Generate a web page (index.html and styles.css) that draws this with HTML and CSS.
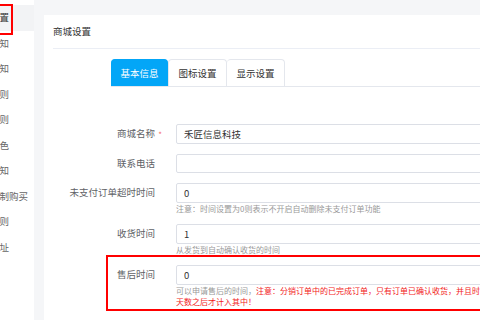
FILE: index.html
```html
<!DOCTYPE html>
<html lang="zh-CN">
<head>
<meta charset="utf-8">
<title>商城设置</title>
<link rel="stylesheet" href="styles.css">
</head>
<body>
<div class="app">
  <aside class="sidebar">
    <div class="nav-item active">商城设置</div>
    <div class="nav-item">短信通知</div>
    <div class="nav-item">邮件通知</div>
    <div class="nav-item">运费规则</div>
    <div class="nav-item">包邮规则</div>
    <div class="nav-item">主题配色</div>
    <div class="nav-item">打印通知</div>
    <div class="nav-item">商品限制购买</div>
    <div class="nav-item">起送规则</div>
    <div class="nav-item">退货地址</div>
    <div class="mark mark-nav"></div>
  </aside>
  <main class="main">
    <section class="card">
      <header class="card-head">商城设置</header>
      <div class="card-body">
        <div class="tabs">
          <div class="tab tab-1 active">基本信息</div>
          <div class="tab tab-2">图标设置</div>
          <div class="tab tab-3">显示设置</div>
        </div>
        <form class="form">
          <div class="row">
            <label class="label req">商城名称</label>
            <div class="field"><input class="input" type="text" value="禾匠信息科技" readonly></div>
          </div>
          <div class="row">
            <label class="label">联系电话</label>
            <div class="field"><input class="input" type="text" value="" readonly></div>
          </div>
          <div class="row">
            <label class="label">未支付订单超时时间</label>
            <div class="field">
              <input class="input" type="text" value="0" readonly>
              <div class="help">注意：时间设置为0则表示不开启自动删除未支付订单功能</div>
            </div>
          </div>
          <div class="row">
            <label class="label">收货时间</label>
            <div class="field">
              <input class="input" type="text" value="1" readonly>
              <div class="help">从发货到自动确认收货的时间</div>
            </div>
          </div>
          <div class="row row-marked">
            <label class="label">售后时间</label>
            <div class="field">
              <input class="input" type="text" value="0" readonly>
              <div class="help">可以申请售后的时间，<span class="warn">注意：分销订单中的已完成订单，只有订单已确认收货，并且时间超过设置的售后</span><br><span class="warn">天数之后才计入其中！</span></div>
            </div>
          </div>
        </form>
      </div>
    </section>
  </main>
</div>
</body>
</html>
```

FILE: styles.css
```css
html, body {
  margin: 0;
  padding: 0;
  width: 480px;
  height: 320px;
  overflow: hidden;
}
body {
  font-family: "Noto Sans CJK SC", "Noto Sans", sans-serif;
  font-size: 9.5px;
  color: #333;
  background: #f5f6f8;
}
.app {
  display: flex;
  height: 320px;
}
.sidebar {
  position: relative;
  flex: none;
  width: 34px;
  padding-top: 5px;
  background: #fff;
  overflow: hidden;
}
.nav-item {
  height: 25.5px;
  line-height: 25.5px;
  white-space: nowrap;
  text-indent: -29px;
  color: #666;
}
.nav-item.active {
  background: #f2f3f5;
  color: #333;
}
.mark {
  position: absolute;
  border: 2px solid #f00;
  box-sizing: border-box;
  pointer-events: none;
}
.mark-nav {
  left: -10px;
  top: 4px;
  width: 23px;
  height: 31px;
}
.main {
  flex: 1;
  min-width: 0;
  padding: 15px 0 0 10px;
}
.card {
  width: 620px;
  height: 305px;
  background: #fff;
}
.card-head {
  margin: 0 9px;
  height: 33px;
  line-height: 33px;
  border-bottom: 1px solid #ebeef5;
  color: #333;
}
.card-body {
  padding: 10px 0 0 9px;
}
.tabs {
  display: flex;
  margin-left: 58px;
  height: 27px;
  border-bottom: 1px solid #e4e7ed;
}
.tab {
  box-sizing: border-box;
  height: 27px;
  line-height: 26px;
  text-align: center;
  color: #333;
  background: #fff;
  border: 1px solid #e4e7ed;
  border-bottom: none;
  border-radius: 4px 4px 0 0;
}
.tab-1 { width: 57px; }
.tab-2 { width: 59px; }
.tab-3 { width: 58px; border-left: none; }
.tab.active {
  background: #03a6f7;
  border-color: #03a6f7;
  color: #fff;
}
.form {
  margin: 37px 0 0;
}
.row {
  position: relative;
  display: flex;
  align-items: flex-start;
  gap: 11px;
  margin-bottom: 10px;
}
.label {
  position: relative;
  flex: none;
  box-sizing: border-box;
  width: 112px;
  padding-right: 10px;
  height: 19.5px;
  line-height: 19.5px;
  text-align: right;
  color: #606266;
  white-space: nowrap;
}
.label.req::after {
  content: "*";
  position: absolute;
  right: 3px;
  top: 1px;
  color: #f56c6c;
  font-size: 8px;
}
.field {
  flex: 1;
  min-width: 0;
}
.input {
  display: block;
  box-sizing: border-box;
  width: 100%;
  height: 19.5px;
  margin: 0;
  padding: 0 7px;
  border: 1px solid #dcdfe6;
  border-radius: 2px;
  font-family: inherit;
  font-size: 9.5px;
  color: #333;
  background: #fff;
  outline: none;
}
.help {
  font-size: 8px;
  line-height: 11.5px;
  color: #999;
  white-space: nowrap;
}
.row-marked .help {
  line-height: 11px;
}
.warn {
  color: #f21b1b;
}
.row-marked::after {
  content: "";
  position: absolute;
  left: 53px;
  right: 0;
  top: -10.5px;
  bottom: -4.5px;
  border: 2px solid #f00;
  pointer-events: none;
}
```
